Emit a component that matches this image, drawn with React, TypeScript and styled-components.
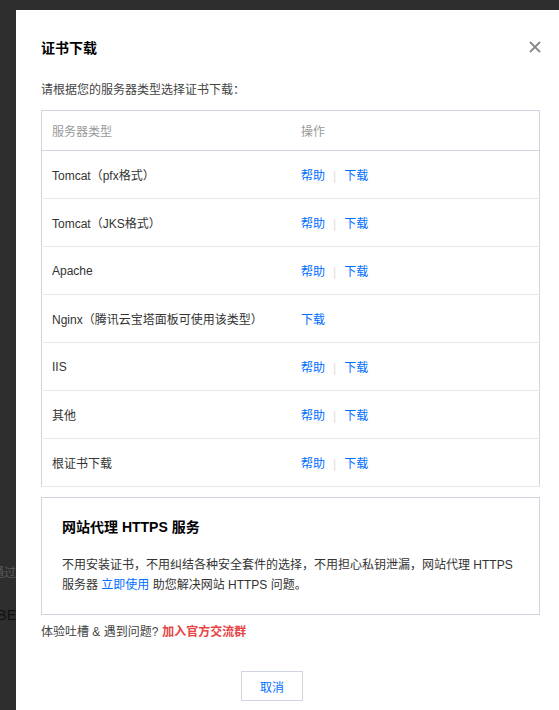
import styled, { createGlobalStyle } from 'styled-components';

interface CertRow {
  name: string;
  help: boolean;
}

const rows: CertRow[] = [
  { name: 'Tomcat（pfx格式）', help: true },
  { name: 'Tomcat（JKS格式）', help: true },
  { name: 'Apache', help: true },
  { name: 'Nginx（腾讯云宝塔面板可使用该类型）', help: false },
  { name: 'IIS', help: true },
  { name: '其他', help: true },
  { name: '根证书下载', help: true },
];

const GlobalStyle = createGlobalStyle`
  html, body {
    margin: 0;
    padding: 0;
    overflow: hidden;
  }
  body {
    font-family: "Liberation Sans", "Noto Sans CJK SC", sans-serif;
    font-size: 12px;
    color: #333;
  }
`;

function CloseIcon() {
  return (
    <svg width="12" height="12" viewBox="0 0 12 12">
      <path d="M1 1 L11 11 M11 1 L1 11" stroke="#888" strokeWidth="1.8" />
    </svg>
  );
}

function App() {
  return (
    <Page>
      <GlobalStyle />
      <Backdrop>
        <BehindText $top={563} $color="#5a5a5a">通过</BehindText>
        <BehindText $top={22} $color="#111" $size={14}>3BE</BehindText>
      </Backdrop>
      <DialogColumn>
        <Dialog>
          <Header>
            <Title>证书下载</Title>
            <CloseButton>
              <CloseIcon />
            </CloseButton>
          </Header>
          <Intro>请根据您的服务器类型选择证书下载：</Intro>
          <Table>
            <thead>
              <tr>
                <HeadCell $first>服务器类型</HeadCell>
                <HeadCell>操作</HeadCell>
              </tr>
            </thead>
            <tbody>
              {rows.map((row) => (
                <BodyRow key={row.name}>
                  <Cell>{row.name}</Cell>
                  <Cell>
                    {row.help && (
                      <>
                        <Link>帮助</Link>
                        <Divider>|</Divider>
                      </>
                    )}
                    <Link>下载</Link>
                  </Cell>
                </BodyRow>
              ))}
            </tbody>
          </Table>
          <PromoBox>
            <PromoTitle>网站代理 HTTPS 服务</PromoTitle>
            <PromoText>
              不用安装证书，不用纠结各种安全套件的选择，不用担心私钥泄漏，网站代理 HTTPS
              服务器 <Link>立即使用</Link> 助您解决网站 HTTPS 问题。
            </PromoText>
          </PromoBox>
          <Feedback>
            体验吐槽 &amp; 遇到问题?<RedLink>加入官方交流群</RedLink>
          </Feedback>
          <Footer>
            <CancelButton>取消</CancelButton>
          </Footer>
        </Dialog>
      </DialogColumn>
    </Page>
  );
}

const Page = styled.div`
  display: flex;
  height: 100vh;
  overflow: hidden;
  background: #2e2e2e;
`;

const Backdrop = styled.div`
  width: 16px;
  flex-shrink: 0;
  display: flex;
  flex-direction: column;
  overflow: hidden;
`;

const BehindText = styled.div<{ $top: number; $color: string; $size?: number }>`
  display: flex;
  justify-content: flex-end;
  margin-top: ${(p) => p.$top}px;
  line-height: 20px;
  white-space: nowrap;
  font-size: ${(p) => p.$size ?? 12}px;
  color: ${(p) => p.$color};
`;

const DialogColumn = styled.div`
  padding-top: 10px;
`;

const Dialog = styled.div`
  width: 549px;
  box-sizing: border-box;
  background: #fff;
  padding: 24px 25px 24px;
`;

const Header = styled.div`
  display: flex;
  justify-content: space-between;
  align-items: center;
  height: 26px;
`;

const Title = styled.h3`
  margin: 0;
  font-size: 14px;
  font-weight: bold;
  color: #000;
`;

const CloseButton = styled.span`
  display: flex;
  margin-right: -1px;
  cursor: pointer;
`;

const Intro = styled.p`
  margin: 20px 0 10px;
  line-height: 20px;
  color: #444;
`;

const Table = styled.table`
  width: 100%;
  border-collapse: collapse;
  border: 1px solid #cfd5de;
`;

const HeadCell = styled.th<{ $first?: boolean }>`
  height: 39px;
  padding: 0 10px;
  width: ${(p) => (p.$first ? '229px' : 'auto')};
  text-align: left;
  font-weight: normal;
  color: #999;
  border-bottom: 1px solid #cfd5de;
`;

const BodyRow = styled.tr`
  border-bottom: 1px solid #e5e8ed;
`;

const Cell = styled.td`
  height: 47px;
  padding: 0 10px;
  color: #333;
`;

const Link = styled.a`
  color: #006eff;
  cursor: pointer;
`;

const Divider = styled.span`
  margin: 0 8px 0 8px;
  color: #ddd;
`;

const PromoBox = styled.div`
  margin-top: 10px;
  border: 1px solid #cfd5de;
  padding: 19px 20px 19px;
`;

const PromoTitle = styled.h4`
  margin: 0 0 18px;
  font-size: 14px;
  line-height: 20px;
  font-weight: bold;
  color: #000;
`;

const PromoText = styled.p`
  margin: 0;
  line-height: 20px;
  color: #333;
`;

const Feedback = styled.p`
  margin: 7px 0 0;
  line-height: 20px;
  color: #444;
`;

const RedLink = styled.a`
  margin-left: 4px;
  font-weight: bold;
  color: #e54545;
  cursor: pointer;
`;

const Footer = styled.div`
  display: flex;
  justify-content: center;
  padding-right: 37px;
  margin-top: 29px;
`;

const CancelButton = styled.button`
  width: 62px;
  height: 30px;
  box-sizing: border-box;
  background: #fff;
  border: 1px solid #cfd5de;
  color: #006eff;
  font-family: inherit;
  font-size: 12px;
  cursor: pointer;
`;

export default App;
